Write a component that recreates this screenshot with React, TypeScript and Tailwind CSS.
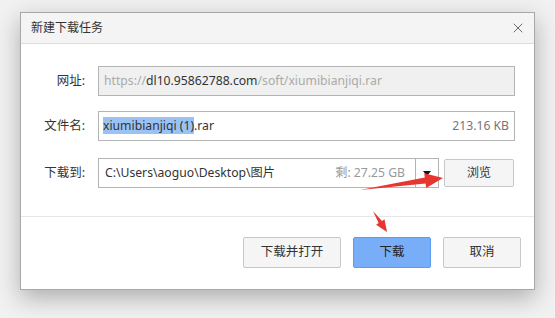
import { X } from "lucide-react";

const font = { fontFamily: '"Noto Sans", "Noto Sans CJK SC", sans-serif' };

function Label({ text }: { text: string }) {
  return <div className="w-[77px] shrink-0 pr-[13px] text-right text-[12.5px] text-[#333]">{text}</div>;
}

export default function App() {
  return (
    <div className="relative h-[318px] w-[555px] overflow-hidden bg-[#f1f1f1] pl-[20px] pt-[12px]" style={font}>
      <div className="flex h-[278px] w-[515px] flex-col border border-[#a8a8a8] bg-white shadow-[0_8px_22px_rgba(0,0,0,0.28)]">
        {/* title bar */}
        <div className="flex h-[31px] shrink-0 items-center justify-between border-b border-[#dcdcdc] bg-[#f4f4f4] pl-[10px] pr-[8px]">
          <span className="text-[12px] text-[#333]">新建下载任务</span>
          <X className="h-[16px] w-[16px] text-[#555]" strokeWidth={1.3} />
        </div>

        {/* fields */}
        <div className="flex flex-col pt-[22px]">
          <div className="flex h-[30px] items-center">
            <Label text="网址:" />
            <div className="flex h-[30px] w-[417px] items-center border border-[#b4b4b4] bg-[#f0f0f0] px-[5px] text-[12.2px] text-[#aaa]">
              https://<span className="text-[#333]">dl10.95862788.com</span>/soft/xiumibianjiqi.rar
            </div>
          </div>
          <div className="mt-[15px] flex h-[30px] items-center">
            <Label text="文件名:" />
            <div className="flex h-[30px] w-[417px] items-center justify-between border border-[#b4b4b4] bg-white pl-[4px] pr-[5px] text-[12.2px] text-[#333]">
              <span>
                <span className="bg-[#9cc2f3]">xiumibianjiqi (1)</span>.rar
              </span>
              <span className="text-[#777]">213.16 KB</span>
            </div>
          </div>
          <div className="mt-[17px] flex h-[30px] items-center">
            <Label text="下载到:" />
            <div className="flex h-[30px] w-[341px] items-center border border-[#b4b4b4] bg-white text-[12.2px]">
              <div className="flex flex-1 items-center justify-between pl-[6px] pr-[10px]">
                <span className="text-[#333]">C:\Users\aoguo\Desktop\图片</span>
                <span className="text-[#999]">剩: 27.25 GB</span>
              </div>
              <div className="flex h-full w-[23px] items-center justify-center border-l border-[#b4b4b4]">
                <div className="h-0 w-0 border-x-[4px] border-t-[5px] border-x-transparent border-t-[#111]" />
              </div>
            </div>
            <button className="ml-[5px] flex h-[28px] w-[70px] items-center justify-center rounded-[2px] border border-[#c8c8c8] bg-[#f5f5f5] text-[12px] text-[#333]">
              浏览
            </button>
          </div>
        </div>

        <div className="mt-[28px] border-t border-[#e6e6e6]" />

        {/* buttons */}
        <div className="flex justify-end gap-[12px] pr-[13px] pt-[20px]">
          <button className="flex h-[31px] w-[98px] items-center justify-center rounded-[2px] border border-[#c8c8c8] bg-[#f5f5f5] text-[12.5px] text-[#333]">
            下载并打开
          </button>
          <button className="flex h-[31px] w-[78px] items-center justify-center rounded-[2px] border border-[#5d9cec] bg-[#78aef8] text-[12.5px] text-[#222]">
            下载
          </button>
          <button className="flex h-[31px] w-[78px] items-center justify-center rounded-[2px] border border-[#c8c8c8] bg-[#f5f5f5] text-[12.5px] text-[#333]">
            取消
          </button>
        </div>
      </div>

      {/* annotation arrows */}
      <svg className="pointer-events-none absolute left-0 top-0" width="555" height="318">
        <polygon
          points="360,190 425.6,183.6 426.2,188 443,178 424.2,173.2 424.8,177.6"
          fill="#e8352f"
        />
        <polygon
          points="373,211 382,220.9 384.5,219.2 387,232 376.1,224.8 378.6,223.1"
          fill="#e8352f"
        />
      </svg>
    </div>
  );
}
